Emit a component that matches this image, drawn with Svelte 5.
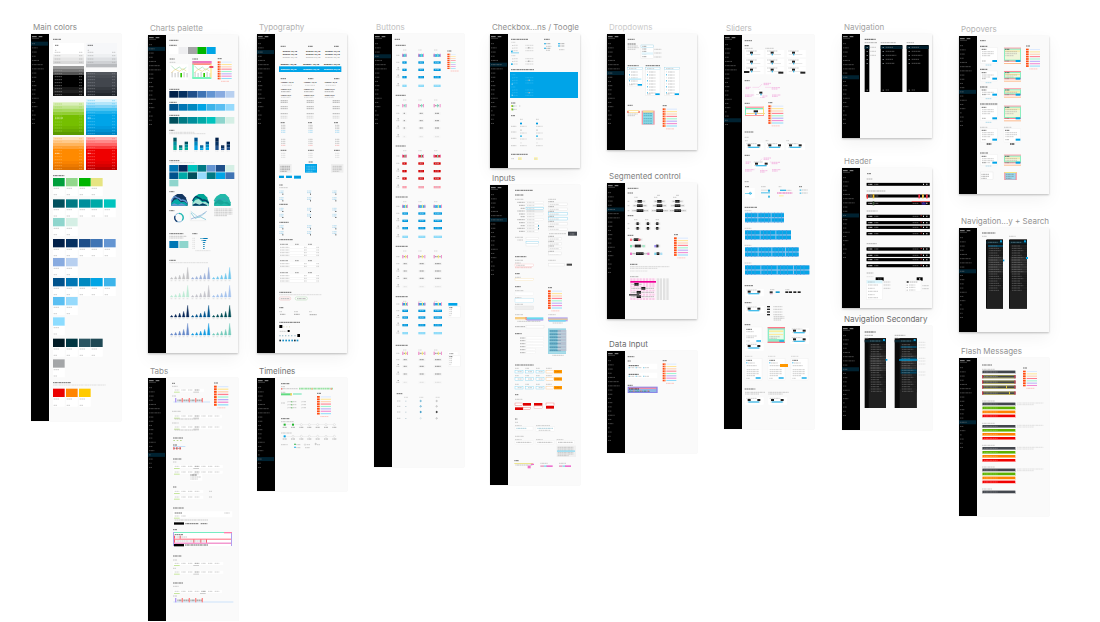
<script>
  // Artboard drawings use three units per pixel; each board gives its own origin.
  const r = (x, y, w, h, c) => ({ k: 'r', x, y, w, h, c });
  const t = (x, y, w, c = '#a5a5a5', h = 2) => ({ k: 't', x, y, w, h, c });
  const b = (x, y, w, c = '#555') => t(x, y, w, c, 3);
  const p = (d, s, f = 'none', sw = 2) => ({ k: 'p', d, s, f, sw });
  const l = (x, y, s, size = 9, c = '#333', w = 700) => ({ k: 'l', x, y, s, size, c, w });
  const o = (x, y, q, s, f = 'none') => ({ k: 'o', x, y, q, s, f });
  const each = (xs, fn) => xs.flatMap((x, i) => fn(x, i));
  const row = (x, y, w, h, step, colors) => colors.map((c, i) => r(x + i * step, y, w, h, c));
  const stack = (x, y, w, h, colors) => colors.map((c, i) => r(x, y + i * h, w, h, c));

  const blue = '#00a4e8';
  const rainbow = ['#dceaff', '#ffe69a', '#ffd0ae', '#ff7f8f', '#a0f5cf', '#b9aef8', '#f18bd3', '#91dcf9'];
  const legend = (x, y, step = 8, w = 32, n = 8) => [
    b(x, y - 8, 13),
    ...rainbow.slice(0, n).flatMap((c, i) => [
      r(x, y + i * step, 6, step - 2, '#ff4b16'), r(x + 6, y + i * step, 3, step - 2, '#ff8748'),
      r(x + 11, y + i * step + 1, w, step - 4, c)
    ]),
    t(x + 10, y + n * step + 4, 24, '#ff9c94', 2)
  ];
  const lines = (x, y, w, n, step = 5, c) => Array.from({ length: n }, (_, i) => t(x, y + i * step, i === n - 1 && n > 1 ? w * 0.7 : w, c, 2));

  // Main colors
  const swatchX = [99, 138, 177, 213, 252];
  const swatches = (y, colors) => colors.flatMap((c, i) => [
    r(swatchX[i], y, 35, 54, '#fff'), r(swatchX[i], y, 35, 25, c),
    t(swatchX[i] + 2, y + 31, 16), t(swatchX[i] + 2, y + 50, 10)
  ]);
  const ramp = (x, y, tints, base, dark, end, mark) => [
    ...stack(x, y, 93, 9, tints),
    r(x, y + tints.length * 9, 93, end - y - tints.length * 9, base),
    r(x, end - 27, 93, 9, dark[0]), r(x, end - 18, 93, 9, dark[1]), r(x, end - 9, 93, 9, dark[2]),
    ...Array.from({ length: Math.floor((end - y) / 9) }, (_, i) => [t(x + 5, y + 5 + i * 9, 22, mark, 2), t(x + 78, y + 5 + i * 9, 9, mark, 2)]).flat()
  ];
  const mainColors = [
    b(99, 73, 24), r(99, 84, 93, 33, '#fff'), b(105, 91, 10), t(105, 106, 4), r(198, 84, 93, 34, '#f6f7f9'), b(203, 91, 16), t(203, 106, 4),
    ...stack(99, 117, 93, 10, ['#f2f2f2', '#e6e6e6', '#d9d9d9']), ...stack(198, 117, 93, 10, ['#eef0f2', '#dfe1e4', '#cfd1d4', '#b9bbbe']),
    ...each([99, 198], x => each([112, 122, 132, 142], y => [t(x + 5, y, 18), t(x + 78, y, 10)])),
    ramp(99, 153, ['#999', '#777', '#555'], '#000', ['#171717', '#202020', '#111'], 243, '#9a9a9a'),
    ramp(198, 171, ['#52565c', '#494d53'], '#42464d', ['#363a40', '#2d3138', '#22262c'], 243, '#85888d'),
    ramp(99, 262, ['#d9efb7', '#c1e58d', '#a8da60', '#91ce32'], '#75bf00', ['#70b600', '#66a900', '#5b9900'], 360, '#9ad650'),
    ramp(198, 252, ['#def5fe', '#b4e6fa', '#82d4f7', '#4ac3f1', '#20b2ec'], '#00a4e8', ['#009adf', '#0091d2', '#0083c1'], 360, '#58c9f5'),
    ramp(99, 366, ['#ffdfb8', '#ffc98a', '#ffb55e', '#ffa032'], '#ff8a00', ['#f98200', '#ed7a00', '#df7100'], 465, '#ffb65c'),
    ramp(198, 366, ['#ffb1b1', '#ff8989', '#ff6464', '#f93a3a'], '#ef0000', ['#e50000', '#d50000', '#bd0000'], 465, '#ff7070'),
    b(105, 309, 24, '#dcf4b5'), b(203, 309, 9, '#c5efff'), b(105, 415, 14, '#ffe0b5'), b(203, 415, 9, '#ffc4c4'),
    b(99, 482, 34),
    swatches(489, ['#009f3c', '#92d88c', '#00b500', '#e6e482']),
    swatches(553, ['#004f5c', '#007a84', '#008f9c', '#00aaa8', '#00c4be']), swatches(609, ['#8ed5cd', '#d5efe5']),
    swatches(672, ['#001f48', '#053061', '#1f4f8a', '#3f74b4', '#6495d2']), swatches(729, ['#88abe0', '#b8d0f0']),
    swatches(789, ['#00528c', '#0077b5', '#0089c0', '#00a5e5', '#3cb4ea']), swatches(846, ['#5abff2', '#96dafc']),
    swatches(907, ['#8cdcff']), swatches(971, ['#001a24', '#003642', '#2b5562', '#1f4854']), swatches(1033, ['#a4a6a8']),
    b(99, 1103, 54), t(99, 1110, 158, '#c8c8c8'), swatches(1121, ['#eb0000', '#ff8500', '#ffca00'])
  ];

  // Charts palette
  const navy = ['#001f48', '#053061', '#1f4f8a', '#3f74b4', '#6495d2', '#88abe0', '#b8d0f0'];
  const sky = ['#00528c', '#0077b5', '#0089c0', '#00a5e5', '#3cb4ea', '#5abff2', '#96dafc'];
  const teal = ['#004f5c', '#007a84', '#008f9c', '#00aaa8', '#00c4be', '#8ed5cd', '#d5efe5'];
  const towers = (x, c) => [[0, 37], [17, 14], [34, 25]].flatMap(([dx, h]) => [
    r(x + dx, 405 - h, 10, h / 3, c[0]), r(x + dx, 405 - h * 2 / 3, 10, h / 3, c[1]), r(x + dx, 405 - h / 3, 10, h / 3, c[2]), t(x + dx, 408, 9, '#ccc', 2)
  ]);
  const spikes = (x, y, c) => [5, 8, 12, 17, 35].flatMap((h, i) => [
    p(`M${x + i * 12} ${y}l4 ${-h}l4 ${h}z`, c, c, 1), t(x + i * 12 + 1, y + 5, 6, '#c8c8c8', 2)
  ]);
  const blob = (x, a, c, d) => [
    p(`M${x} 572v-12l7-16 11-7h15l10 10 6 16v9z`, 'none', a),
    p(`M${x} 558q8-19 16-10q9 2 13 8q10-4 19 8`, d, 'none', 4),
    p(`M${x} 572v-7l9-11 9-2 11 10 9-2 10 7v5z`, 'none', c),
    p(`M${x} 572v-3l9-4 11 4 10-4 13 5v2z`, 'none', d)
  ];
  const comboChart = x => [
    r(x, 148, 56, 46, '#fff'), ...[0, 9, 18, 27, 36, 45].map((d, i) => r(x + 5 + d, 171 + (i % 2) * 3, 5, 16 - (i % 2) * 3, i === 3 ? '#2fc700' : '#ddd')),
    p(`M${x + 5} 152l12 12 12-8 10 9 11-8`, '#7fcf9b', 'none', 1.5), p(`M${x + 5} 173l12-10 12 6 11-8 10 7`, '#f1cd62', 'none', 1.5), t(x, 142, 17)
  ];
  const charts = [
    b(102, 76, 27), b(102, 91, 22), ...row(102, 96, 27, 21, 28, ['#fff', '#eeeef0', '#a4a4a6', '#00b500', '#00a5e5']),
    b(103, 132, 15), comboChart(103), b(171, 132, 17), r(171, 138, 58, 8, '#ef76bf'), comboChart(172),
    r(171, 145, 57, 5, '#ff9180'), r(171, 186, 57, 6, '#77f5bc'), r(171, 148, 4, 42, '#77f5bc'), r(225, 148, 4, 40, '#ffeb8a'), r(222, 153, 12, 6, '#f0475f'),
    legend(247, 139, 7, 31),
    b(102, 223, 30), ...row(102, 228, 27, 20, 28, navy), b(102, 262, 22), ...row(102, 267, 27, 20, 28, sky), b(102, 301, 30), ...row(102, 306, 27, 20, 28, teal),
    b(102, 346, 15), t(102, 352, 75, '#c4c4c4', 2), t(102, 356, 108, '#c4c4c4', 2),
    towers(114, ['#004f5c', '#008f9c', '#00aa98']), towers(177, ['#00528c', '#0089c0', '#00a5e5']), towers(240, ['#001f48', '#053061', '#1f4f8a']),
    b(102, 437, 30), t(102, 443, 75, '#c4c4c4', 2),
    ...row(102, 450, 27, 20, 28, ['#0077b5', '#052b5c', '#00c4be', '#007a84', '#6495d2', '#1f4f8a', '#d5efe5']),
    ...row(102, 472, 27, 20, 28, ['#00528c', '#00aaa8', '#004f5c', '#96dafc', '#007a84', '#00a5e5', '#3f74b4']), r(102, 494, 27, 20, '#8ed5cd'),
    b(102, 530, 15), blob(108, '#123660', '#00aaa8', '#6495d2'), blob(172, '#00a596', '#a6e4d6', '#003d65'), blob(237, '#22b9a9', '#16a598', '#22b9a9'),
    p('M242 560l8-8 8 3 8-6 10 9', '#4e8ec0'), lines(237, 582, 54, 5, 5), b(102, 587, 15),
    o(131, 608, 13, '#5b9ccc'), p('M131 595a13 13 0 0 1 10 21', '#1dbbb1', 'none', 4), p('M119 603a13 13 0 0 0 7 17', '#183e70', 'none', 4),
    p('M167 594l12 16 15-5 18 9', '#63bdd0'), p('M167 612l13-5 18-7 16-11', '#7d9ecd'), p('M167 590l24 18 20-15', '#96cfe0'), p('M165 587v30h48', '#ddd', 'none', 1),
    b(102, 656, 42), t(102, 664, 51), t(102, 669, 42), r(102, 678, 27, 21, '#0077b5'), r(132, 678, 27, 21, '#8ed5cd'), b(171, 656, 15),
    ...[[194, 24], [198, 15], [202, 9], [204, 5], [204, 5], [205, 4]].flatMap(([x, w], i) => [t(171, 670 + i * 6, 8, '#ccc', 2), r(x, 669 + i * 6, w, 3, '#79bdd5'), r(204, 669 + i * 6, w / 2, 3, '#0077b5')]), t(180, 707, 45, '#ccc', 2),
    b(102, 736, 20), t(102, 743, 117, '#c8c8c8'),
    spikes(105, 792, '#c3c3c5'), spikes(168, 792, '#9eb3dc'), spikes(231, 792, '#72c7ee'),
    spikes(105, 846, '#bdebd5'), spikes(168, 846, '#c4c4cb'), spikes(231, 846, '#a5c3ed'),
    spikes(105, 906, '#082858'), spikes(168, 906, '#00538b'), spikes(231, 906, '#004d56'),
    spikes(105, 960, '#6689c9'), spikes(168, 960, '#149be0'), spikes(231, 960, '#75cbbb')
  ];

  // Tabs
  const tabs = (x, y, w, hot) => [
    r(x, y - 4, w, 9, '#fff'), ...Array.from({ length: Math.floor(w / 20) }, (_, i) => t(x + 4 + i * 20, y, 14, i === hot ? '#555' : '#aaa')), r(x + 2, y + 5, 17, 3, '#c6e69d'),
    ...(hot ? [r(x + hot * 20, y + 5, 17, 3, '#ccc')] : [])
  ];
  const tabSpec = (x, y, w) => [r(x, y + 6, w, 2, '#b8d9fb'), t(x + 12, y + 2, 75, '#999', 5), ...[5, 25, 46, 65, 85].map((d, i) => r(x + d, y - 5, 4, 13, i ? '#ff8b8b' : '#b39bf5'))];
  const tabsBoard = [
    b(114, 86, 9), t(114, 95, 17), tabs(118, 106, 92, 3), t(114, 124, 13), tabSpec(118, 135, 110), legend(240, 93, 7.8, 32),
    t(114, 170, 27), tabs(118, 184, 146, 3), t(122, 193, 72), t(114, 205, 20), tabs(118, 217, 146, 3), t(122, 226, 72), b(117, 250, 30),
    ...each([118, 128, 138], x => r(x, 256, 5, 3, '#bbd690')), b(117, 271, 12), ...each([117, 126, 136], x => r(x, 276, 5, 9, '#ff8b8b')), r(117, 274, 37, 3, '#c6def8'), t(119, 281, 22, '#555'),
    b(117, 313, 26), t(117, 322, 10), tabs(118, 335, 148, 3), tabs(118, 352, 148, 3), r(168, 359, 37, 19, '#fff'), b(169, 361, 20), lines(169, 367, 32, 2, 6),
    b(117, 397, 10), tabs(118, 410, 90), t(225, 410, 9), tabs(118, 427, 90), t(225, 427, 9),
    b(117, 460, 33), r(117, 470, 178, 18, '#fff'), b(122, 475, 22), t(271, 475, 16), tabs(118, 484, 45), t(122, 496, 100), r(120, 503, 30, 7, '#000'), b(154, 507, 40), b(200, 507, 20),
    b(117, 525, 12), r(117, 532, 177, 42, '#fff'), r(117, 532, 177, 3, '#77edc2'), r(270, 532, 24, 4, '#ff7faa'), b(122, 540, 25), r(119, 552, 175, 3, '#ff6c7e'), r(119, 564, 175, 3, '#ee67b9'),
    ...each([120, 137], x => r(x, 543, 3, 9, '#ff5566')), ...each([120, 178, 199, 216], x => r(x, 554, 3, 10, '#ff5566')), t(124, 547, 35), t(124, 559, 95), r(117, 532, 3, 42, '#b0a0ee'), r(291, 535, 3, 39, '#b0a0ee'), r(120, 568, 30, 7, '#000'), t(153, 571, 70, '#444', 3),
    b(117, 604, 25), t(117, 616, 12), tabs(118, 626, 150, 3), t(117, 641, 9), tabs(118, 652, 150, 3), b(117, 685, 31), t(117, 695, 17), tabs(118, 710, 146, 4), t(117, 724, 12), tabSpec(118, 735, 180)
  ];

  // Typography
  const table = (y, n) => [t(96, y, 24, '#555'), t(141, y, 11, '#555'), t(180, y, 13, '#555'), r(94, y + 5, 120, n * 8, '#fff'),
    ...Array.from({ length: n }, (_, i) => [t(96, y + 9 + i * 8, 28), t(168, y + 9 + i * 8, 8), t(205, y + 9 + i * 8, 8), r(94, y + 13 + i * 8, 120, 1, '#e8e8e8')]).flat()];
  const typography = [
    ...each([98, 180, 258], x => [b(x, 94, 15), b(x, 191, 16), b(x, 323, 12), b(x, 406, 17)]),
    ...[104, 174, 232].flatMap(x => [l(x, 110, 'Display 32/48', 7), l(x, 119, 'Display 32/48', 7), l(x, 129, 'Display 32/48', 7, '#999', 400)]),
    ...[98, 166, 228].map(x => l(x, 150, 'Display1 32/48', 7, '#111')),
    r(93, 154, 187, 17, blue), ...[98, 166, 228].map(x => l(x, 165, 'Display2 32/48', 7, '#fff')),
    ...[99, 168, 230].flatMap(x => [l(x, 204, 'Heading 1 36/48', 5), t(x + 3, 211, 30, '#bbb'), l(x, 224, 'Heading 2 32/40', 4), t(x, 230, 28, '#777'), l(x, 242, 'Heading 3 28/36', 4), t(x, 247, 28, '#bbb')]),
    ...each([98, 176, 254], x => [...[257, 262, 275, 281, 296].map(y => t(x, y, 21, '#777')), ...[304, 309].map(y => t(x, y, 20, '#bbb'))]),
    ...each([98, 180, 260], x => [...[331, 336, 341].map(y => t(x + 1, y, 14)), ...[347, 352].map(y => t(x + 1, y, 14, '#83ccef')), ...[373, 379, 385].map(y => t(x + 1, y, 14)), t(x + 1, 391, 14, '#f39b9b'), ...[415, 421, 427].map(y => t(x + 1, y, 14, '#ccc'))]),
    b(182, 441, 13), r(93, 447, 38, 26, '#eee'), r(171, 447, 36, 26, blue), r(249, 447, 37, 26, '#eee'), lines(97, 454, 29, 4, 5, '#777'), lines(175, 454, 28, 4, 5, '#84d6f6'), lines(254, 454, 28, 4),
    r(93, 482, 15, 7, blue), r(114, 482, 18, 7, blue), r(138, 482, 21, 9, blue), t(97, 486, 8, '#107cb5'), t(117, 486, 12, '#107cb5'), t(142, 486, 14, '#107cb5'),
    b(94, 510, 10), t(94, 518, 26), b(94, 568, 25), b(94, 622, 28),
    ...each([94, 177, 253], x => each([528, 548, 580, 598, 632, 650], y => [t(x, y, 14, '#91cdea'), t(x, y + 5, 13, '#7ebfe2'), r(x + 9, y + 8, 3, 3, '#444')])),
    b(94, 674, 41), table(688, 4), table(737, 2), table(773, 3),
    b(94, 832, 36), t(94, 839, 126, '#c5c5c5'), { k: 'pill', x: 94, y: 846, w: 34, h: 9, s: '#e59090' }, { k: 'pill', x: 142, y: 846, w: 36, h: 9, s: '#8fc78f' }, t(98, 851, 27, '#777'), t(147, 851, 27, '#777'),
    b(94, 878, 13), t(94, 890, 8), t(138, 890, 12), t(183, 890, 8), t(96, 898, 16, '#666'), t(138, 898, 18, '#666'), t(185, 899, 21, '#666'),
    b(94, 922, 62), r(94, 930, 9, 9, '#000'), ...[106, 115, 123].map(x => r(x, 934, 3, 3, '#ddb')), r(119, 945, 6, 6, '#000'), t(95, 949, 20), ...[94, 102, 111, 120, 129, 139].map(x => r(x, 960, 4, 4, '#a9c5d2')), r(148, 957, 8, 9, '#000'),
    ...[94, 103, 112, 121, 130, 138, 146].map((x, i) => r(x, 974, 5, 5, i === 0 || i === 5 ? '#1b303e' : '#168fc8'))
  ];

  // Timelines
  const timeline = (y, c) => [r(104, y, 158, 1, '#ddd'), ...[110, 135, 160, 184, 209, 234, 259].flatMap((x, i) => {
    const done = i < (c === blue ? 1 : 2);
    return [...(done ? [r(x - 3, y - 3, 6, 6, c)] : [o(x, y, 3, '#ddd', '#fff')]), t(x - 6, y + 8, 13, '#777')];
  })];
  const timelines = [
    b(99, 1107, 26), t(99, 1116, 13), t(99, 1122, 50, '#ccc', 4), t(153, 1122, 102, '#84dc91', 5), r(99, 1120, 4, 5, '#f2887e'), r(190, 1120, 4, 5, '#ffb38b'), r(248, 1120, 4, 5, '#ff9a8a'), t(99, 1133, 14),
    r(99, 1136, 32, 6, '#61db80'), r(127, 1136, 5, 6, '#ffd05c'), r(135, 1136, 26, 4, '#89e8c1'), legend(207, 1144, 7.2, 31), t(99, 1165, 12),
    ...[117, 130, 159].flatMap((x, i) => each([1161, 1170, 1179], y => [r(x, y - 1, 3, 3, i === 1 ? '#40bb40' : '#ddd'), t(x + 4, y, 11)])),
    b(99, 1212, 26), t(99, 1221, 38), timeline(1230, '#22b52e'), t(99, 1255, 33), timeline(1265, blue), t(99, 1290, 20),
    r(139, 1287, 4, 4, '#18ab35'), r(139, 1296, 4, 4, blue), t(145, 1290, 12), t(145, 1299, 12), o(171, 1290, 2, '#ccc'), t(176, 1290, 10), t(171, 1299, 15), o(203, 1288, 2, '#aaa'), t(207, 1290, 9)
  ];

  // Buttons
  const buttonGroup = (y, rows, c, pale, icon = false) => [
    b(91, y, icon ? 36 : 30), ...[113, 159, 206].map(x => t(x, y + 14, 10, '#bbb')),
    ...rows.flatMap((dy, i) => {
      const fill = i === rows.length - 1 ? pale : c;
      return [t(93, y + dy, 9), ...(i > 1 ? [r(97, y + dy - 7, 3, 3, '#888')] : []), ...[111, 159, 205].flatMap((x, j) => {
        const w = (icon ? 17 : 13) + j * 4;
        return [r(x, y + dy - 3, w, 7, fill), t(x + 4, y + dy, w - 8, fill === '#f3f3f3' ? '#444' : fill === '#f7f7f7' ? '#ccc' : '#b5e8fc', 2),
          ...(i === 0 ? [r(x, y + dy - 5, 3, 10, '#f07ac0'), r(x + w - 3, y + dy - 5, 3, 10, '#f196cf'), r(x + w / 2, y + dy - 5, 3, 10, icon ? '#ffed76' : '#78e3c2')] : [])];
      })];
    })
  ];
  const buttons = [
    b(88, 73, 16), buttonGroup(91, [30, 51, 73, 95, 121], '#0097dc', '#8bdaf8'), legend(246, 116, 6, 14),
    buttonGroup(241, [31, 54, 76, 98, 124], '#f3f3f3', '#f7f7f7'), buttonGroup(393, [30, 52, 75, 97, 123], '#d90000', '#ff9eab'),
    buttonGroup(546, [28, 49, 71, 93, 119], '#0097dc', '#8bdaf8', true), buttonGroup(694, [31, 52, 74, 96, 121], '#f3f3f3', '#f7f7f7', true),
    buttonGroup(845, [22, 42, 62, 85, 109], '#0097dc', '#8bdaf8', true), buttonGroup(991, [24, 43, 63, 86, 111], '#f3f3f3', '#f7f7f7', true),
    r(249, 864, 27, 8, blue), { k: 'box', x: 249, y: 875, w: 36, h: 32, s: '#eee', f: '#fff' }, b(252, 878, 9), lines(252, 884, 8, 4, 6), r(249, 1011, 28, 9, '#fff'), t(252, 1016, 13, '#555'), { k: 'box', x: 249, y: 1022, w: 36, h: 32, s: '#eee', f: '#fff' }, b(252, 1025, 9), lines(252, 1031, 8, 4, 6),
    b(94, 1136, 18), ...[116, 162, 211].map(x => t(x, 1147, 13, '#bbb')), ...[1158, 1174, 1191, 1210].flatMap((y, i) => [t(95, y, 10), r(120, y - 1, 3, 3, '#b5c8d0'), o(166, y, 2, i === 3 ? '#c9dce4' : '#3b9dc8', i === 2 ? '#0478b8' : 'none'), o(214, y, 2, i === 2 ? '#333' : '#aaa', i === 2 ? '#111' : 'none')])
  ];

  // Checkboxes
  const checks = (x, y, c = '#bbb') => [t(x, y, 12, c), ...each([9, 17, 25], d => [r(x + 3, y + d - 1, 3, 3, c), t(x + 8, y + d, 11, c), t(x + 42, y + d, 24, c)]), r(x + 51, y + 15, 3, 3, '#777')];
  const checkbox = [
    b(93, 73, 52), b(192, 73, 17), checks(94, 82), r(93, 107, 5, 5, '#25b4e9'), r(93, 112, 24, 3, '#86d3ef'), checks(94, 122), r(93, 145, 5, 5, '#25b4e9'),
    ...[[193, 86], [235, 86], [193, 100], [235, 93]].flatMap(([x, y]) => [r(x, y - 2, 4, 4, '#00a0e0'), t(x + 6, y, 12, '#777')]), t(198, 94, 16), t(198, 106, 12), t(237, 104, 16),
    b(93, 164, 70), r(90, 171, 204, 78, blue), checks(94, 179, '#39bdf2'), checks(94, 216, '#39bdf2'), r(95, 206, 3, 3, '#caf0ff'), r(95, 239, 3, 3, '#caf0ff'), r(146, 194, 3, 3, '#caf0ff'), r(146, 232, 3, 3, '#caf0ff'),
    b(93, 264, 14), ...[273, 283].flatMap(y => [r(93, y - 3, 6, 6, '#d3dd57'), r(97, y - 2, 3, 5, '#35aa52'), t(101, y, 9)]), t(117, 273, 5), b(93, 302, 12),
    ...each([120, 168], x => [t(x, 313, 8), ...[[325, '#009adf'], [345, '#ddd'], [363, '#56c3ea'], [383, '#eee']].flatMap(([y, c]) => [r(x, y - 2, 6, 5, c), t(x, y + 9, 20, '#b5b5b5')])]), ...[334, 351, 370, 392].map(y => t(93, y, 16)),
    b(93, 418, 50), t(94, 431, 8), r(114, 427, 11, 8, '#fcf19a'), r(162, 427, 11, 8, '#fcf19a'), r(116, 429, 6, 4, '#ddd'), r(164, 429, 6, 4, '#ddd')
  ];

  // Inputs
  const field = (x, y, w = 52, s = '#ddd', h = 7, f = '#fff') => ({ k: 'box', x, y, w, h, s, f });
  const inputs = [
    b(105, 526, 54), b(105, 540, 26), t(105, 553, 25), t(205, 553, 23),
    ...[562, 571, 580, 588, 597, 605, 614, 623, 632, 640, 649].flatMap((y, i) => [t(112 + (i % 3) * 5, y, 22 - (i % 3) * 5, '#777'), ...(i !== 5 ? [field(138, y - 3, i > 6 ? 38 : 52, i === 2 ? '#58c7ed' : '#e6e6e6', 6, i === 3 ? '#eee' : '#fff')] : []), t(141, y, 22, '#bbb')]), r(174, 630, 3, 5, '#55aacc'), r(174, 639, 3, 4, '#6699aa'),
    ...[560, 575, 589, 604, 619, 635, 664, 679, 693, 709].flatMap((y, i) => [t(205, y, 18, '#777'), field(205, y + 4, 57 - (i > 5 ? 17 : 0), i === 2 || i === 3 ? '#66c8ec' : '#ddd'), t(209, y + 8, 28, '#bbb')]), r(264, 650, 27, 12, '#42464d'), t(207, 656, 51), t(271, 657, 13, '#bbb'),
    t(105, 667, 24), t(112, 675, 18), field(138, 667, 38), field(138, 679, 38, '#66c8ec'), field(138, 686, 38), field(205, 711, 40),
    b(105, 725, 34), t(105, 736, 24), t(105, 744, 17), field(105, 747, 56, '#f5b5b5'), t(109, 751, 25), t(105, 758, 50, '#ed9999'), t(205, 736, 22), field(205, 746, 48), r(260, 746, 16, 6, '#444'),
    b(105, 776, 15), t(105, 787, 17), field(105, 790, 56, '#f7dca5'), b(105, 815, 18), t(105, 827, 25), field(105, 831, 56, '#eee', 10), t(105, 848, 19), field(105, 851, 56, '#a5ddf2', 12), t(105, 868, 24), field(105, 873, 56, '#ddd', 11, '#eee'), legend(204, 826, 7.2, 31),
    t(105, 899, 24), t(205, 899, 22), r(140, 912, 50, 5, '#b4a6ee'), r(105, 906, 34, 7, '#f8cd80'), r(137, 906, 3, 9, '#f46977'), r(140, 907, 50, 6, '#69d9ee'), t(112, 919, 70), r(204, 907, 59, 12, '#b4a6ee'), r(204, 911, 59, 3, '#f2d67c'), r(207, 915, 50, 5, '#76d8f1'), t(218, 924, 30), t(105, 935, 30, '#777'), field(138, 932, 54),
    b(105, 956, 20), ...[969, 977, 986, 995, 1004, 1013].flatMap((y, i) => [t(120, y, 16, '#777'), t(142, y, 18), field(138, y - 4, i < 4 ? 53 : 28, '#eee')]),
    r(204, 940, 54, 77, '#9dd7e6'), r(209, 945, 24, 63, '#6fb4cb'), r(233, 945, 26, 63, '#b7c2d1'), ...[948, 958, 967, 976, 986, 997, 1007].flatMap(y => [t(209, y, 33, '#367b9b', 2), r(207, y + 4, 50, 1, '#c8ebf2')]), t(217, 1021, 34),
    b(105, 1050, 56), ...[1065, 1087, 1113].flatMap((y, i) => [...[105, 136, 168].flatMap(x => [t(x, y - 5, 11), field(x, y + 1, 24, '#67cae9', 8), t(x + 8, y + 5, 12)]), t(198, y - 5, 18), field(198, y + 1, 23, '#f6b86d', 8), r(222, y, 24, 10, '#ff9800'), t(225, y + 5, 17, '#ca6500')]),
    b(105, 1139, 10), t(105, 1153, 22), field(105, 1164, 23, '#ea4e4e', 7), r(129, 1164, 24, 8, '#df0000'), r(105, 1177, 24, 8, '#df0000'), field(129, 1177, 23, '#ea4e4e'), r(162, 1164, 25, 8, '#df0000'), field(162, 1173, 25, '#ea9999'), field(198, 1164, 24, '#ea4e4e'), r(198, 1173, 24, 8, '#df0000'),
    b(105, 1212, 7), t(105, 1222, 9), t(105, 1232, 20), field(105, 1235, 54, '#eee', 10), t(109, 1240, 31, '#67a9bd'), t(168, 1232, 42), field(168, 1235, 56, '#eee', 14), t(172, 1240, 47, '#67a9bd'), t(176, 1246, 35), t(105, 1264, 27),
    ...[105, 168, 230].flatMap(x => [t(x, 1274, 20), field(x, 1277, 54, '#eee', 10), t(x + 4, 1282, 45, '#888')]), r(230, 1292, 58, 34, '#f0f0f0'), lines(233, 1297, 47, 6), r(231, 1306, 54, 5, '#a2dff2'),
    b(103, 1337, 14), r(103, 1344, 56, 2, '#e8dc5a'), t(106, 1350, 52, '#999'), r(153, 1346, 9, 4, '#ef70c8'), r(143, 1352, 9, 8, '#ef70c8'), ...[[181, 37], [237, 36]].flatMap(([x, w]) => [t(x, 1345, w - 15), r(x, 1351, w * 0.3, 5, '#e9a7c9'), r(x + w * 0.3, 1351, w * 0.25, 5, '#91dff0'), r(x + w * 0.5, 1351, w * 0.5, 5, '#ec72d0')])
  ];

  // Dropdowns
  const menu = (x, y, w, h) => [field(x, y, w, '#e5e5e5', h), field(x, y, w, '#8dd3ec', 7), t(x + 4, y + 4, w * 0.5), ...Array.from({ length: Math.floor(h / 9) - 1 }, (_, i) => [r(x + 4, y + 12 + i * 9, 3, 3, i % 2 ? '#20ade3' : '#ddd'), t(x + 10, y + 14 + i * 9, w * 0.45, '#999')]).flat(), r(x + w - 14, y + h - 6, 13, 5, blue), t(x + 4, y + h - 4, 11)];
  const dropdowns = [
    b(84, 73, 21), b(84, 87, 24), t(84, 93, 31), lines(84, 98, 33, 2), field(124, 90, 37, '#ddd', 41), field(124, 90, 37, '#8dd3ec', 7), ...[94, 102, 109, 117, 125].map(y => t(128, y, 13, '#666')), r(126, 112, 34, 7, '#e2f5fc'), ...[103, 114, 126].map(y => t(164, y, 21)),
    b(84, 152, 33), b(138, 152, 43), menu(84, 157, 44, 56), r(86, 190, 39, 5, '#c8edfa'), menu(138, 157, 43, 84), menu(195, 157, 44, 84), b(84, 271, 15), r(83, 286, 36, 8, '#ffdc80'), r(83, 288, 4, 6, '#f46977'), r(116, 288, 4, 6, '#f46977'), r(87, 288, 29, 4, '#fff'), lines(84, 297, 31, 2),
    r(126, 287, 39, 42, '#f59aa6'), r(130, 287, 31, 6, '#f3e193'), r(130, 293, 31, 35, '#8ddcea'), ...[296, 302, 311, 318, 325].map(y => t(132, y, 25, '#388fa4')), legend(189, 280, 7.2, 32)
  ];

  // Segmented control
  const seg = (x, y, w, c = '#111') => [r(x, y - 4, w, 8, '#eee'), r(x + w * 0.3, y - 4, w * 0.38, 8, c), t(x + 3, y, w - 6, '#888', 2)];
  const segmented = [
    b(84, 520, 32), b(84, 534, 16), ...[114, 173, 230].map(x => t(x - 10, 547, 10)), ...[559, 572, 587].flatMap((y, i) => [t(84, y, 6), ...[114, 173, 227].map(x => seg(x - 11 - i * 4, y, 35 + i * 9))]).flat(), t(173, 541, 7, '#777'), t(230, 541, 7, '#777'),
    b(84, 602, 17), ...[103, 136, 168].map(x => t(x, 614, 10)), ...[626, 640].flatMap(y => [t(84, y, 6), ...[105, 136, 164].map(x => seg(x, y, 18))]).flat(), b(84, 661, 17), seg(91, 674, 38), seg(91, 693, 48), seg(91, 716, 60), seg(164, 693, 18), seg(164, 716, 22),
    ...[[91, 671, '#ff7788'], [116, 671, '#ff7788'], [91, 690, '#78e5b3'], [129, 690, '#a3efc8'], [91, 713, '#ed77c7'], [143, 713, '#ed77c7'], [164, 690, '#9b8bf0'], [164, 713, '#75d4ed'], [182, 713, '#a9dff5']].map(([x, y, c]) => r(x, y, 6, 7, c)), legend(223, 667, 7.2, 31),
    b(91, 748, 22), lines(91, 755, 118, 2, 5, '#bbb'), t(91, 768, 53, '#ccc'), t(91, 785, 25, '#777'), r(92, 790, 76, 65, '#ffebf6'), ...[92, 101, 111, 120, 130, 139, 149, 158].map(x => r(x, 790, 6, 65, '#f8cce9')), ...[171, 180, 190, 200].map(x => r(x, 790, 7, 65, '#e2e2e2')), r(92, 798, 77, 5, '#f00098'),
    ...[[104, 808, 13], [125, 820, 12], [111, 832, 13], [111, 845, 13]].flatMap(([x, y, w]) => [r(93, y - 3, y === 808 ? 38 : 73, 7, '#fdf2f9'), r(x, y - 4, w, 8, '#111'), t(95, y, y === 808 ? 32 : 68, '#888')]), r(88, 837, 31, 5, '#555')
  ];

  const dataInput = [
    b(84, 1025, 20), b(84, 1038, 9), r(84, 1046, 89, 17, '#fff'), r(84, 1073, 89, 16, '#fff'), ...[1052, 1078].flatMap(y => [b(87, y, 30, '#333'), ...[87, 108, 131].flatMap(x => [r(x, y + 4, 3, 4, '#6bc4e1'), t(x + 5, y + 6, 12)])]), legend(189, 1045, 7, 30), b(84, 1111, 15),
    r(84, 1115, 90, 19, '#8b86e8'), r(87, 1118, 83, 4, '#ef8fa8'), r(87, 1122, 83, 9, '#8fb8e4'), b(88, 1122, 30, '#222'), ...[90, 100, 112, 122, 134, 144].map((x, i) => r(x, 1126, 4, 4, i % 2 ? '#f0977c' : '#54c7a5')), t(88, 1129, 62, '#40446d')
  ];

  // Sliders
  const slider = (x, y, double = true, w = 56) => [r(x, y - 13, w, 22, '#fff'), t(x + 4, y - 10, w - 24), r(x + 5, y, w - 15, 2, '#ddd'), ...(double ? [r(x + 10, y - 1, 33, 4, '#45bdea'), r(x + 8, y - 8, 9, 6, '#222'), r(x + 37, y - 8, 9, 6, '#222')] : [r(x + 15, y - 8, 9, 6, '#222'), r(x + 18, y - 2, 4, 5, '#35b4e7')])];
  const pinkNotes = y => [...[[146, -3, 22], [92, 9, 15], [170, 10, 26], [90, 32, 28], [135, 35, 22], [171, 32, 25]].flatMap(([x, dy, w]) => [t(x, y + dy, w, '#ee84cf'), t(x, y + dy + 4, w * 0.7, '#ee84cf')]), p(`M112 ${y + 9}h20l9-10M150 ${y + 9}h19M120 ${y + 29}l13-14M138 ${y + 20}l5 11`, '#f3a2db', 'none', 1)];
  const blueGrid = (x, y, n, w) => [r(x, y, n * w + (n - 1) * 3, 30, '#8cc0ec'), ...Array.from({ length: n }, (_, i) => [r(x + i * (w + 3), y + 2, w, 11, '#05a5e7'), r(x + i * (w + 3), y + 17, w, 10, '#05a5e7'), ...[7, 18, 29].map(d => r(x + i * (w + 3) + d, y, 2, 30, '#479ddd'))]).flat()];
  const dialog = (x, y) => [field(x, y, 51, '#eee', 64), b(x + 4, y + 5, 18), t(x + 9, y + 13, 20), t(x + 5, y + 21, 31), lines(x + 5, y + 33, 36, 4, 6), t(x + 4, y + 59, 10), r(x + 32, y + 56, 15, 4, blue)];
  const sliders = [
    b(89, 77, 22), b(89, 92, 13), t(89, 100, 24), t(151, 100, 26), ...each([90, 152, 216], x => [...slider(x, 118, false), ...slider(x, 145, false), ...slider(x, 169, false)]), r(87, 168, 16, 6, '#222'), r(190, 170, 15, 6, '#222'), r(256, 170, 15, 6, '#222'),
    b(89, 197, 15), pinkNotes(208), slider(118, 238, false, 24), b(89, 265, 15), r(90, 275, 57, 28, '#fff'), r(90, 275, 57, 3, '#ff7889'), r(90, 279, 57, 4, '#7aedbd'), r(90, 275, 3, 27, '#7aedbd'), r(144, 275, 3, 27, '#ffe279'), r(90, 300, 57, 3, '#ff9a9a'), r(116, 286, 13, 6, '#222'), r(94, 294, 56, 3, '#f5d98a'), r(120, 291, 5, 9, '#6aa9ee'), legend(160, 271, 7.2, 34),
    b(89, 351, 27), t(89, 367, 12), ...each([90, 152, 214], x => [t(x, 377, 8), ...slider(x, 396)]), b(89, 421, 15), pinkNotes(432), slider(112, 451, true, 52), t(89, 500, 13, '#666'),
    b(90, 515, 13), r(90, 519, 29, 31, '#fff'), r(90, 534, 21, 3, '#80daf2'), o(106, 535, 3, '#18a8df'), t(138, 515, 15), r(138, 524, 26, 3, '#ddd'), r(138, 532, 27, 3, '#49bee9'), r(159, 524, 6, 6, '#27aedf'), r(159, 542, 6, 6, '#4cbcdf'), t(191, 515, 8), r(195, 524, 18, 4, '#35b8e8'), t(214, 526, 15), t(186, 534, 46, '#e982c3', 4), r(192, 541, 14, 3, '#ffee9a'), b(252, 515, 9), ...[525, 534].flatMap(y => [r(254, y - 2, 5, 5, '#76cbe9'), t(261, y, 17)]),
    b(89, 577, 37), ...[587, 640, 691, 744].map(y => t(89, y, 20)), blueGrid(90, 593, 3, 37), blueGrid(90, 645, 3, 44), blueGrid(90, 696, 4, 38), blueGrid(90, 750, 4, 46),
    b(89, 812, 26), slider(90, 835), t(165, 824, 14), r(164, 829, 9, 6, '#333'), r(182, 829, 12, 5, '#1698cd'), t(165, 837, 8, '#e789be'), ...[211, 222, 235, 248].map(x => r(x, 829, 9, 5, '#222')), t(211, 824, 12),
    b(89, 863, 20), slider(90, 886), ...[875, 883, 891, 899].flatMap(y => [r(156, y - 2, 9, 4, '#222'), t(175, y, 27)]), lines(176, 905, 32, 3), b(89, 929, 18), dialog(90, 920).slice(0, 0), field(90, 936, 51, '#eee', 47), b(94, 943, 18), t(94, 950, 22), lines(94, 963, 32, 2), t(94, 978, 10), r(124, 976, 14, 4, blue),
    r(158, 936, 52, 48, '#8debc8'), r(162, 944, 44, 28, '#eafbe9'), r(158, 936, 52, 4, '#ff7788'), r(162, 947, 43, 3, '#ffe779'), r(162, 957, 43, 3, '#ffe9a0'), lines(163, 965, 32, 2), r(158, 980, 52, 4, '#ff7788'), r(193, 976, 14, 4, blue), slider(226, 952), slider(226, 978), slider(90, 998),
    ...[[90, 1031], [159, 1031], [228, 1031]].flatMap(([x, y]) => [t(x, y - 7, 22, '#bbb'), ...dialog(x, y), r(x + 4, y + 11, 3, 3, blue)]), r(195, 1047, 24, 9, '#ff9800'), b(89, 1122, 32), lines(90, 1132, 60, 2), lines(160, 1132, 61, 2), slider(90, 1160), slider(160, 1160)
  ];

  // Navigation family
  const navPanel = (x, w, y = 90, h = 141) => [r(x, y, w, h, '#000'), r(x, y + 2, w, 10, '#001e2c'), ...Array.from({ length: 5 }, (_, i) => [r(x + 6, y + 6 + i * 12, 3, 3, '#9ba3a8'), ...(w > 20 ? [t(x + 15, y + 7 + i * 12, 22 + (i % 3) * 5, '#888')] : [])]).flat(), r(x + 6, y + 134, 3, 3, '#aaa'), ...(w > 20 ? [t(x + 15, y + 135, 10, '#888')] : [])];
  const navigation = [b(90, 73, 33, '#333'), ...[[90, 37], [138, 46], [216, 22]].map(([x, w]) => t(x, 83, w, '#777')), navPanel(90, 14), navPanel(138, 65), navPanel(216, 66), ...[97, 109, 121].map(y => t(107, y, 18))];
  const strip = (y, s = 0) => [r(96, y - 5, 189, 10, s ? '#333' : '#999'), r(96, y - 4, 189, 8, '#000'), b(101, y, 12, '#ddd'), b(119, y, 13, '#777'), ...(s ? [t(234, y, 18, '#999'), r(258, y - 3, 3, 3, '#ee3333')] : []), ...[265, 275].map(x => r(x, y - 2, 3, 4, '#ddd'))];
  const header = [
    b(97, 475, 13), t(96, 491, 17, '#777'), strip(507), t(96, 527, 56, '#777'), strip(542), r(96, 537, 4, 13, '#ff3030'), r(114, 537, 5, 12, '#edbd26'), ...[251, 262, 274].map((x, i) => r(x, 537, 5, 12, i === 1 ? '#eac43a' : '#ee354a')), strip(564, 1), r(231, 558, 55, 2, '#f23333'), r(114, 558, 5, 12, '#385235'), r(261, 561, 12, 7, '#35259a'),
    t(96, 587, 33, '#777'), ...[603, 622, 636, 655].flatMap(y => strip(y, 1)), t(96, 685, 31, '#777'), ...[701, 720, 733, 751].flatMap(y => strip(y, 1)),
    t(96, 773, 20, '#777'), t(96, 784, 20, '#ccc'), r(123, 786, 24, 10, '#000'), r(246, 786, 18, 10, '#000'), t(130, 791, 11, '#999'), r(253, 789, 4, 4, '#ddd'), field(96, 795, 47, '#eee', 57), r(96, 795, 47, 9, '#d9f5fd'), ...[800, 809, 819, 828, 838, 847].map((y, i) => t(100, y, 20 + (i % 2) * 10)), ...[800, 809, 819].map(y => t(147, y, 20)),
    field(212, 795, 47, '#eee', 34), r(216, 797, 6, 6, '#555'), t(225, 800, 23, '#777'), ...[809, 816, 824].flatMap(y => [r(216, y - 1, 3, 3, '#aaa'), t(223, y, 19)]), t(263, 811, 20), t(263, 820, 20)
  ];
  const darkMenu = (x, y, w, h, split = 12, lit = []) => [r(x, y, w, h, '#0a0a0a'), r(x + split, y, w - split, h, '#202020'), r(x + split, y, w - split, h * 0.73, '#111'), r(x, y + 5, w, 7, '#09252f'), t(x + split + 4, y + 8, w - split - 20, '#7b9aa6'), ...Array.from({ length: Math.floor(h / 7.2) - 8 }, (_, i) => [r(x + split + 3, y + 16 + i * 7, w - split - 3, 6, lit.includes(i) ? '#064661' : i > 4 && i < 12 ? '#343434' : '#202020'), t(x + split + 7, y + 19 + i * 7, 24 + (i % 3) * 5, '#777')]).flat(), r(x + w - 9, y + 2, 6, 6, '#0a9ed8')];
  const navSecondary = [b(90, 951, 33, '#333'), ...[[90, 25], [180, 32]].flatMap(([x, w]) => [t(x, 961, w, '#777'), t(x, 968, 10, '#ccc')]), darkMenu(90, 970, 64, 209), darkMenu(180, 970, 66, 209, 15, [1, 6, 11, 12]), r(153, 1032, 5, 5, blue), r(193, 1033, 55, 4, '#009edc'), ...[982, 990, 998, 1030, 1038, 1047, 1071, 1080].map(y => t(252, y, 20, '#ccc'))];
  const navSearch = [b(96, 655, 40, '#444'), t(96, 665, 15), t(177, 665, 20), darkMenu(108, 675, 51, 207, 3, [0]), darkMenu(177, 675, 54, 207, 2), r(159, 735, 4, 5, blue), r(228, 727, 6, 6, blue)];

  // Popovers
  const pop = (x, y, h, spec = false) => [field(x, y, 50, '#eee', h), ...(spec ? [r(x, y, 51, 3, '#ff8897'), r(x, y + 3, 51, h - 9, '#8cedbf'), r(x + 3, y + 6, 45, h - 17, '#f0f6da'), r(x + 3, y + 9, 45, 3, '#f3e59a'), r(x, y + h - 8, 51, 3, '#ff8897'), r(x, y + h - 1, 51, 3, '#ffbd90')] : []), b(x + 3, y + 5, 14), lines(x + 4, y + 12, 35, h > 30 ? 3 : 2, 6), t(x + 4, y + h - 7, 11, '#777'), r(x + 35, y + h - 10, 14, 6, blue)];
  const popovers = [
    b(90, 78, 18), ...[[95, 99, 47], [164, 169, 30], [217, 221, 26], [268, 273, 45]].flatMap(([ty, y, h]) => [b(90, ty, ty === 268 ? 53 : 22, '#444'), ...pop(92, y, h), ...pop(162, y, h, true), t(107, y + h + 5, 17, '#75bedb')]),
    legend(228, 102, 7.1, 31), t(90, 338, 22), t(162, 338, 22), pop(92, 342, 40), pop(162, 342, 40), t(110, 388, 14, '#222', 5), t(180, 388, 14, '#222', 5), b(90, 415, 24), pop(92, 420, 31), pop(162, 420, 31, true), t(107, 454, 18, '#75bedb'), field(92, 472, 37, '#ddd', 23), r(163, 472, 37, 24, '#f67e8b'), r(166, 475, 31, 20, '#9ad8ed'), r(163, 472, 37, 3, '#f5e583'), ...each([94, 168], x => lines(x, 479, 23, 3, 6, '#777'))
  ];

  // Flash messages
  const flash = (y, c, pale, mark) => [r(96, y, 102, 9, pale), r(98, y, 97, 7, c), t(102, y + 4, 41, mark)];
  const flashBoard = [
    b(96, 1051, 31), t(96, 1064, 38), ...[1068, 1082, 1098, 1113, 1131].flatMap((y, i) => [...flash(y, '#42464d', '#b0b2b5', '#aaa'), ...(i ? [r(98, y, 97, 2, '#a39a35'), r(98, y + 7, 97, 2, '#a39a35'), r(96, y - 1, 4, 10, '#c14455'), r(193, y - 1, 4, 10, '#c14455'), ...(i > 2 ? [r(168 + (i - 3) * 9, y, 3, 8, '#e1ca45')] : [])] : [])]),
    legend(219, 1068, 7, 31, 7), ...[1164, 1231, 1297, 1362].flatMap(y => [t(96, y - 5, 39), ...flash(y, '#42464d', '#b0b2b5', '#8d9095'), ...flash(y + 12, '#5cb100', '#c4e49d', '#a4de66'), ...flash(y + 24, '#ff8100', '#ffd19e', '#ffc06e'), ...flash(y + 36, '#f00000', '#ffaaaa', '#ff8080'), t(201, y + 1, 79, '#ccc', 2), t(201, y + 6, 50, '#ccc', 2)]), t(96, 1423, 30), flash(1428, '#42464d', '#b0b2b5', '#8d9095')
  ];

  const columns = [
    { top: 21, boards: [{ title: 'Main colors', x: 33, y: 57, h: 387, on: 0, ink: '#8c8c8c', art: mainColors }] },
    { top: 22, boards: [{ title: 'Charts palette', x: 38, y: 60, h: 318, on: 1, ink: '#a5a5a5', soft: true, art: charts }, { title: 'Tabs', x: 42, y: 70, h: 243, on: 16, ink: '#929292', gap: 12, art: tabsBoard }] },
    { top: 21, boards: [{ title: 'Typography', x: 27, y: 57, h: 319, on: 2, ink: '#b2b2b2', soft: true, art: typography }, { title: 'Timelines', x: 27, y: 1090, h: 113, on: 17, ink: '#737373', gap: 12, art: timelines }] },
    { top: 21, boards: [{ title: 'Buttons', x: 26, y: 57, h: 433, on: 3, ink: '#c2c2c2', art: buttons }] },
    { top: 21, boards: [{ title: 'Checkbox...ns / Toogle', x: 30, y: 57, h: 134, on: 5, ink: '#929292', soft: true, art: checkbox }, { title: 'Inputs', x: 30, y: 510, h: 300, on: 6, ink: '#7c7c7c', gap: 4, art: inputs }] },
    { top: 21, boards: [{ title: 'Dropdowns', x: 22, y: 57, h: 116, on: 7, ink: '#cbcbcb', soft: true, art: dropdowns }, { title: 'Segmented control', x: 22, y: 504, h: 136, on: 4, ink: '#808080', soft: true, gap: 20, art: segmented }, { title: 'Data Input', x: 22, y: 1008, h: 102, on: -1, ink: '#6c6c6c', gap: 19, art: dataInput }] },
    { top: 22, boards: [{ title: 'Sliders', x: 27, y: 60, h: 394, on: 18, ink: '#bdbdbd', art: sliders }] },
    { top: 21, boards: [{ title: 'Navigation', x: 22, y: 57, h: 104, on: 8, ink: '#a3a3a3', soft: true, art: navigation }, { title: 'Header', x: 22, y: 458, h: 140, on: 9, ink: '#999', soft: true, gap: 17, art: header }, { title: 'Navigation Secondary', x: 22, y: 933, h: 104, on: 8, ink: '#6c6c6c', gap: 5, art: navSecondary }] },
    { top: 23, boards: [{ title: 'Popovers', x: 27, y: 64, h: 158, on: 11, ink: '#b5b5b5', soft: true, art: popovers }, { title: 'Navigation...y + Search', x: 27, y: 640, h: 104, on: 8, ink: '#929292', soft: true, gap: 21, art: navSearch }, { title: 'Flash Messages', x: 27, y: 1030, h: 158, on: 13, ink: '#929292', gap: 13, art: flashBoard }] }
  ];
  const itemWidths = [9, 18, 15, 11, 21, 33, 35, 14, 14, 9, 14, 11, 10, 20, 10, 16, 6, 11, 8, 9];
</script>

<main>
  {#each columns as column}
    <section style:padding-top="{column.top}px">
      {#each column.boards as board}
        <figure class:soft={board.soft} style:margin-top="{board.gap ?? 0}px">
          <figcaption style:color={board.ink}>{board.title}</figcaption>
          <svg viewBox="{board.x} {board.y} 270 {board.h * 3}" aria-hidden="true">
            <rect x={board.x} y={board.y} width="270" height={board.h * 3} fill="#fafafa" />
            <rect x={board.x} y={board.y} width="54" height={board.h * 3} fill="#000" />
            <path d="M{board.x + 3} {board.y + 8}h14m6 0h11" stroke="#e0e0e0" stroke-width="2" />
            <path d="M{board.x + 3} {board.y + 13}h21" stroke="#555" stroke-width="2" />
            {#if board.on >= 0}
              <rect x={board.x} y={board.y + 23 + board.on * 12.6} width="51" height="12" fill="#002231" />
            {/if}
            {#each itemWidths as w, i}
              <path class="words" d="M{board.x + 3} {board.y + 29 + i * 12.6}h{w}" stroke="#7c7c7c" stroke-width="2" />
            {/each}
            {#each board.art.flat(3) as s}
              {#if s.k === 'r'}
                <rect x={s.x} y={s.y} width={s.w} height={s.h} fill={s.c} />
              {:else if s.k === 't'}
                <path class="words" d="M{s.x} {s.y}h{s.w}" stroke={s.c} stroke-width={s.h} />
              {:else if s.k === 'p'}
                <path d={s.d} stroke={s.s} fill={s.f} stroke-width={s.sw} />
              {:else if s.k === 'o'}
                <circle cx={s.x} cy={s.y} r={s.q} stroke={s.s} fill={s.f} stroke-width="2" />
              {:else if s.k === 'l'}
                <text x={s.x} y={s.y} font-size={s.size} font-weight={s.w} fill={s.c}>{s.s}</text>
              {:else if s.k === 'box'}
                <rect x={s.x} y={s.y} width={s.w} height={s.h} fill={s.f} stroke={s.s} stroke-width="1" />
              {:else if s.k === 'pill'}
                <rect x={s.x} y={s.y} width={s.w} height={s.h} rx="4" fill="#fff" stroke={s.s} />
              {/if}
            {/each}
          </svg>
        </figure>
      {/each}
    </section>
  {/each}
</main>

<style>
  :global(body) {
    margin: 0;
    background: #fff;
  }
  main {
    display: grid;
    grid-template-columns: 117fr 109fr 117fr 116fr 117fr 117fr 118fr 117fr 90fr;
    padding: 0 51px 0 31px;
    font-family: Inter, Roboto, sans-serif;
  }
  section {
    display: flex;
    flex-direction: column;
    align-items: flex-start;
    min-width: 90px;
  }
  figure {
    width: 90px;
    margin: 0;
  }
  figcaption {
    height: 13px;
    padding-left: 2px;
    font-size: 8px;
    line-height: 13px;
    white-space: nowrap;
  }
  svg {
    display: block;
    width: 100%;
    box-shadow: 0 0 1px rgba(0, 0, 0, 0.15);
    font-family: Roboto, sans-serif;
  }
  .soft svg {
    box-shadow: 0 1px 2px rgba(0, 0, 0, 0.25), 0 6px 16px rgba(0, 0, 0, 0.05);
  }
  .words {
    fill: none;
    stroke-dasharray: 4 1 7 1;
    opacity: 0.8;
  }
</style>
